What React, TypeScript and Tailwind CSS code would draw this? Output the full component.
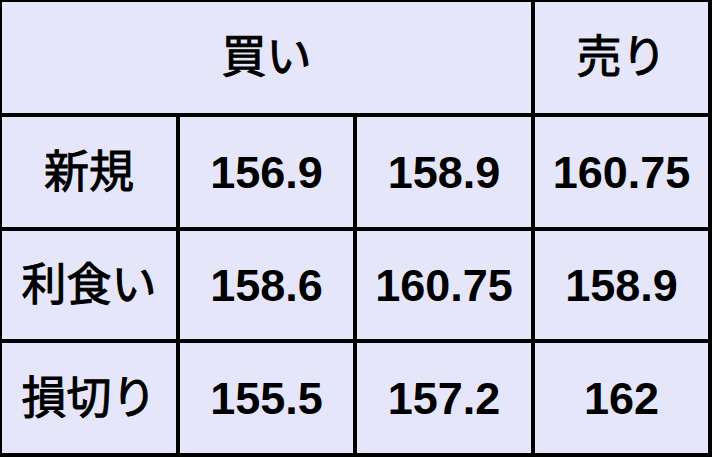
import React from 'react';

const cell =
  'bg-[#e6e6fa] flex items-center justify-center text-black text-[45px] leading-none';
const num = `${cell} font-bold`;
const label = `${cell} font-normal [-webkit-text-stroke:1px_black]`;

const jp = { fontFamily: '"Liberation Sans", "Noto Sans CJK JP", sans-serif' };

const rows = [
  { label: '新規', values: ['156.9', '158.9', '160.75'] },
  { label: '利食い', values: ['158.6', '160.75', '158.9'] },
  { label: '損切り', values: ['155.5', '157.2', '162'] },
];

const App = () => {
  return (
    <div
      className="w-[712px] h-[457px] bg-black pt-[2px] pl-[2px] pr-[4px] pb-[4px] grid grid-cols-[174px_173px_174px_173px] grid-rows-[111px_110px_108px_110px] gap-[4px]"
      style={jp}
    >
      <div className={`${label} col-span-3`}>買い</div>
      <div className={label}>売り</div>
      {rows.map((row) => (
        <React.Fragment key={row.label}>
          <div className={label}>{row.label}</div>
          {row.values.map((v, i) => (
            <div key={i} className={num}>
              {v}
            </div>
          ))}
        </React.Fragment>
      ))}
    </div>
  );
};

export default App;
